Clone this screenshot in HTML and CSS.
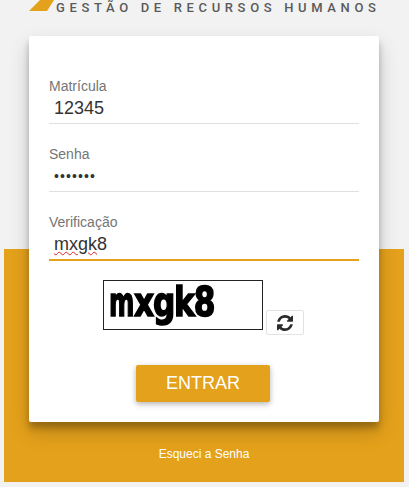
FILE: index.html
```html
<!DOCTYPE html>
<html lang="pt">
<head>
<meta charset="utf-8">
<title>Gestão de Recursos Humanos</title>
<link rel="stylesheet" href="styles.css">
</head>
<body>
<div class="page">
  <header class="brand">
    <svg class="brand-mark" viewBox="0 0 25 11" width="25" height="11" aria-hidden="true"><polygon points="11,0 25,0 18,11 0,11" fill="#e4a11b"/></svg>
    <span class="brand-name">GESTÃO DE RECURSOS HUMANOS</span>
  </header>
  <main class="card">
    <div class="field">
      <label class="label">Matrícula</label>
      <div class="value">12345</div>
    </div>
    <div class="field">
      <label class="label">Senha</label>
      <div class="value dots">•••••••</div>
    </div>
    <div class="field active">
      <label class="label">Verificação</label>
      <div class="value"><span class="misspelled">mxgk</span>8</div>
    </div>
    <div class="captcha-row">
      <div class="captcha"><span class="captcha-text"><span class="captcha-m">m</span>xgk8</span></div>
      <button class="refresh" type="button" aria-label="Atualizar">
        <svg viewBox="0 0 1536 1536" width="16" height="16" aria-hidden="true"><path fill="#2b2b2b" d="M1511 928q0 5-1 7-64 268-268 434.500T764 1536q-146 0-282.500-55T238 1324l-129 129q-19 19-45 19t-45-19-19-45V960q0-26 19-45t45-19h448q26 0 45 19t19 45-19 45l-137 137q71 66 161 102t187 36q134 0 250-65t186-179q11-17 53-117 8-23 30-23h192q13 0 22.500 9.500t9.500 22.500zm25-800v448q0 26-19 45t-45 19h-448q-26 0-45-19t-19-45 19-45l138-138q-148-137-349-137-134 0-250 65T332 500q-11 17-53 117-8 23-30 23H50q-13 0-22.500-9.500T18 608v-7q65-268 270-434.500T768 0q146 0 284 55.500T1297 212l130-129q19-19 45-19t45 19 19 45z"/></svg>
      </button>
    </div>
    <div class="actions">
      <button class="submit" type="button">ENTRAR</button>
    </div>
  </main>
  <footer class="band">
    <a class="forgot">Esqueci a Senha</a>
  </footer>
</div>
</body>
</html>
```
FILE: styles.css
```css
html, body {
  margin: 0;
  height: 100%;
  overflow: hidden;
  background: #f2f2f2;
}
.page {
  display: flex;
  flex-direction: column;
  font-family: "Liberation Sans", Arial, sans-serif;
}
.brand {
  width: 360px;
  height: 36px;
  margin-left: 29px;
  display: flex;
  align-items: flex-start;
  gap: 2px;
}
.brand-mark { flex: none; }
.brand-name {
  font-family: Roboto, sans-serif;
  font-weight: 500;
  font-size: 13px;
  line-height: 13px;
  letter-spacing: 4.65px;
  color: #5a5a5a;
  white-space: nowrap;
  margin-top: 1px;
}
.card {
  position: relative;
  z-index: 1;
  box-sizing: border-box;
  width: 350px;
  height: 386px;
  margin-left: 29px;
  padding: 42px 20px 0;
  background: #fff;
  border-radius: 2px;
  box-shadow: 0 10px 20px rgba(0,0,0,.19), 0 6px 6px rgba(0,0,0,.23);
}
.field {
  height: 45px;
  margin-bottom: 22px;
  border-bottom: 1px solid #e0e0e0;
}
.field.active {
  border-bottom: 2px solid #e4a11b;
}
.label {
  display: block;
  font-size: 14px;
  line-height: 16px;
  color: #757575;
}
.value {
  padding-left: 5px;
  font-size: 18px;
  line-height: 21px;
  margin-top: 4px;
  color: #333;
}
.dots {
  font-size: 14px;
  letter-spacing: 1.1px;
}
.misspelled {
  text-decoration: underline wavy #d22;
  text-decoration-thickness: 1px;
  text-underline-offset: 1px;
}
.captcha-row {
  display: flex;
  align-items: flex-end;
  margin: -3px 0 0 54px;
  gap: 3px;
}
.captcha {
  box-sizing: border-box;
  width: 160px;
  height: 50px;
  border: 1px solid #222;
  background: #fff;
  display: flex;
  align-items: center;
  padding-left: 5px;
}
.captcha-text {
  font-family: "DejaVu Sans", sans-serif;
  font-weight: 700;
  font-size: 40px;
  letter-spacing: -1.5px;
  color: #000;
  -webkit-text-stroke: 1.6px #000;
  line-height: 30px;
  margin-bottom: 6px;
  filter: blur(.4px);
  white-space: nowrap;
  transform: scaleX(.78);
  transform-origin: left center;
}
.captcha-m {
  display: inline-block;
  width: 32px;
  transform: scaleX(.78);
  transform-origin: left center;
}
.refresh {
  box-sizing: border-box;
  width: 38px;
  height: 25px;
  margin-bottom: -5px;
  padding: 0;
  display: flex;
  align-items: center;
  justify-content: center;
  background: #fff;
  border: 1px solid #e2e2e2;
  border-radius: 2px;
}
.actions {
  display: flex;
  justify-content: center;
  margin-top: 35px;
  padding-right: 2px;
}
.submit {
  width: 134px;
  height: 37px;
  border: 0;
  border-radius: 2px;
  background: #e4a11b;
  color: #fff;
  font-family: "Liberation Sans", Arial, sans-serif;
  font-size: 18px;
  box-shadow: 0 2px 5px rgba(0,0,0,.22), 0 2px 8px rgba(0,0,0,.1);
}
.band {
  box-sizing: border-box;
  width: 400px;
  height: 233px;
  margin-top: -173px;
  margin-left: 4px;
  padding-top: 195px;
  background: #e4a11b;
  text-align: center;
}
.forgot {
  font-size: 12px;
  line-height: 14px;
  color: #fff;
}
```
